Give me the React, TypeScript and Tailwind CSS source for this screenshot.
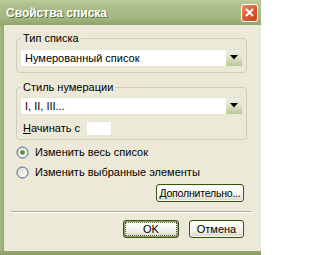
import React from "react";

function DropButton() {
  return (
    <div className="w-[16px] h-full flex items-center justify-center bg-[linear-gradient(180deg,#eef0e0_0%,#dfe5c8_45%,#b9c792_100%)]">
      <svg width="8" height="5" viewBox="0 0 8 5" className="-mt-[2px]">
        <path d="M0 0h8L4 4.5z" fill="#000" />
      </svg>
    </div>
  );
}

function Combo({ value }: { value: string }) {
  return (
    <div className="h-[18px] flex bg-white border border-[#e4e6d8]">
      <div className="flex-1 flex items-center pl-[4px] text-black leading-none">{value}</div>
      <DropButton />
    </div>
  );
}

function Radio({ checked, label }: { checked?: boolean; label: string }) {
  return (
    <div className="h-[13px] flex items-center ml-[12px] gap-[6px]">
      <svg width="13" height="13" viewBox="0 0 13 13">
        <defs>
          <linearGradient id={checked ? "rg1" : "rg2"} x1="0" y1="0" x2="1" y2="1">
            <stop offset="0" stopColor="#dcdbd0" />
            <stop offset="1" stopColor="#ffffff" />
          </linearGradient>
        </defs>
        <circle cx="6.5" cy="6.5" r="5.5" fill={`url(#${checked ? "rg1" : "rg2"})`} stroke="#3a6594" />
        {checked && <circle cx="6.5" cy="6.5" r="2.3" fill="#5e8a3a" />}
      </svg>
      <span className="leading-none text-black">{label}</span>
    </div>
  );
}

function Button({ children, w, focused }: { children: React.ReactNode; w: string; focused?: boolean }) {
  return (
    <div
      className={`${w} h-[18px] rounded-[3px] border border-[#37540f] p-[1px] ${
        focused ? "bg-[#8fa86a]" : "bg-[#f6f5ee]"
      }`}
    >
      <div className="w-full h-full rounded-[2px] bg-[linear-gradient(180deg,#ffffff_0%,#f3f2ea_60%,#dcdacb_100%)] flex items-center justify-center">
        <div
          className={`h-full w-full flex items-center justify-center leading-none text-black whitespace-nowrap ${
            focused ? "border border-dotted border-[#555]" : ""
          }`}
        >
          {children}
        </div>
      </div>
    </div>
  );
}

export default function App() {
  return (
    <div className="w-[261px] h-[255px] flex flex-col bg-[#a3b67f] font-['Liberation_Sans','Noto_Sans',sans-serif] text-[11px] overflow-hidden select-none">
      <div className="h-[25px] shrink-0 flex items-center pl-[6px] pr-[3px] bg-[linear-gradient(180deg,#bccb9c_0%,#abbd88_30%,#a5b882_70%,#8fa36b_100%)]">
        <span className="text-white font-bold text-[12px] leading-none [text-shadow:1px_1px_0_#5d6e40]">
          Свойства списка
        </span>
        <div className="ml-auto w-[17px] h-[18px] rounded-[3px] border border-white bg-[linear-gradient(135deg,#ec8a63_0%,#d9542a_60%,#c44418_100%)] flex items-center justify-center">
          <svg width="9" height="9" viewBox="0 0 9 9">
            <path d="M1 1l7 7M8 1l-7 7" stroke="#fff" strokeWidth="2" />
          </svg>
        </div>
      </div>

      <div className="flex-1 flex min-h-0">
        <div className="w-[4px] bg-[linear-gradient(90deg,#a7b986,#93a96e)]" />
        <div className="flex-1 bg-[#ece9d8] flex flex-col">
          <fieldset className="mt-[7px] ml-[12px] w-[231px] border border-[#d0cdbc] rounded-[4px] px-[3px] pb-[5px]">
            <legend className="ml-[1px] px-[2px] leading-[13px] text-black">Тип списка</legend>
            <div className="mt-[4px]">
              <Combo value="Нумерованный список" />
            </div>
          </fieldset>

          <fieldset className="mt-[8px] ml-[12px] w-[231px] border border-[#d0cdbc] rounded-[4px] px-[3px] pb-[3px]">
            <legend className="ml-[1px] px-[2px] leading-[13px] text-black">Стиль нумерации</legend>
            <div className="mt-[3px]">
              <Combo value="I, II, III..." />
            </div>
            <div className="mt-[6px] flex items-center">
              <span className="ml-[3px] w-[63px] leading-none text-black">
                <span className="underline">Н</span>ачинать с
              </span>
              <div className="w-[26px] h-[15px] bg-white border border-[#e4e6d8]" />
            </div>
          </fieldset>

          <div className="mt-[6px]">
            <Radio checked label="Изменить весь список" />
          </div>
          <div className="mt-[7px]">
            <Radio label="Изменить выбранные элементы" />
          </div>

          <div className="mt-[5px] flex justify-end pr-[17px]">
            <Button w="w-[88px]">
              <span className="text-[10.5px] tracking-[-0.2px]">
                <span className="underline">Д</span>ополнительно...
              </span>
            </Button>
          </div>

          <div className="mt-[9px] ml-[7px] mr-[10px] h-[2px] border-t border-[#aca899] border-b border-b-white" />

          <div className="mt-[7px] flex justify-end pr-[17px] gap-[10px]">
            <Button w="w-[56px]" focused>
              OK
            </Button>
            <Button w="w-[55px]">Отмена</Button>
          </div>
        </div>
      </div>
      <div className="h-[4px] shrink-0 bg-[linear-gradient(180deg,#93a96e,#8aa064)]" />
    </div>
  );
}
